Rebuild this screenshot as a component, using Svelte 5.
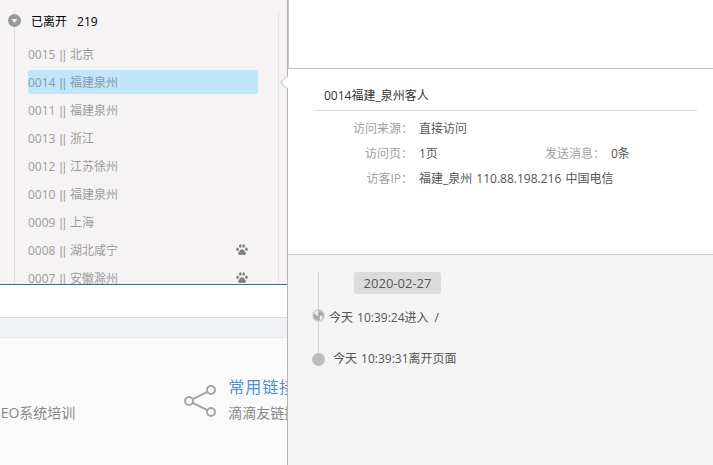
<script>
  const visitors = [
    { id: '0015', area: '北京' },
    { id: '0014', area: '福建泉州', active: true },
    { id: '0011', area: '福建泉州' },
    { id: '0013', area: '浙江' },
    { id: '0012', area: '江苏徐州' },
    { id: '0010', area: '福建泉州' },
    { id: '0009', area: '上海' },
    { id: '0008', area: '湖北咸宁', paw: true },
    { id: '0007', area: '安徽滁州', paw: true }
  ]
</script>

<div class="page">
  <div class="left">
    <div class="sidebar">
      <div class="tree">
        <div class="group">
          <span class="toggle"><svg width="13" height="13" viewBox="0 0 13 13"><circle cx="6.5" cy="6.5" r="6.5" fill="#999" /><path d="M3.6 5h5.8L6.5 9z" fill="#f5f3f4" /></svg></span>
          <span class="group-name">已离开</span>
          <span>219</span>
        </div>
        <ul>
          {#each visitors as v}
            <li class:active={v.active}>
              <span>{v.id} <span class="sep">||</span> {v.area}</span>
              {#if v.paw}
                <svg class="paw" width="12" height="12" viewBox="0 0 12 12" fill="#808080">
                  <ellipse cx="1.6" cy="5.2" rx="1.3" ry="1.7" />
                  <ellipse cx="4.3" cy="2" rx="1.3" ry="1.8" />
                  <ellipse cx="7.7" cy="2" rx="1.3" ry="1.8" />
                  <ellipse cx="10.4" cy="5.2" rx="1.3" ry="1.7" />
                  <path d="M6 5.2c1.3 0 1.9 1 2.6 2 .8.9 1.4 1.4 1.2 2.5-.2 1.3-1.500 1.500-2.300 1.300-.6-.1-1-.3-1.500-.3s-.9.2-1.500.3c-.8.2-2.100 0-2.300-1.300-.2-1.100.4-1.600 1.200-2.500.7-1 1.300-2 2.600-2z" />
                </svg>
              {/if}
            </li>
          {/each}
        </ul>
      </div>
    </div>
    <div class="input-strip"></div>
    <div class="grey-strip"></div>
    <div class="footer">
      <div class="seo">SEO系统培训</div>
      <div class="links">
        <svg width="34" height="34" viewBox="0 0 34 34" fill="none" stroke="#a6a6a6" stroke-width="2">
          <circle cx="6" cy="17" r="4" />
          <circle cx="28" cy="6" r="4" />
          <circle cx="28" cy="28" r="4" />
          <path d="M9.600 15.200L24.400 7.800M9.600 18.800L24.400 26.200" />
        </svg>
        <div class="links-text">
          <div class="links-title">常用链接</div>
          <div class="links-sub">滴滴友链接</div>
        </div>
      </div>
    </div>
  </div>

  <div class="right">
    <div class="top-blank"></div>
    <div class="card">
      <span class="arrow"></span>
      <div class="card-title">0014福建_泉州客人</div>
      <div class="info">
        <span class="label">访问来源：</span>
        <span class="value wide">直接访问</span>
        <span class="label">访问页：</span>
        <span class="value">1页</span>
        <span class="label msg">发送消息：</span>
        <span class="value">0条</span>
        <span class="label">访客IP：</span>
        <span class="value wide spaced">福建_泉州 110.88.198.216 中国电信</span>
      </div>
    </div>
    <div class="history">
      <div class="timeline">
        <span class="line"></span>
        <div class="date">2020-02-27</div>
        <div class="event enter">
          <svg width="13" height="13" viewBox="0 0 13 13">
            <circle cx="6.500" cy="6.500" r="6.500" fill="#d0d0d0" />
            <circle cx="6.500" cy="6.500" r="5" fill="#a8a8a8" />
            <path d="M3 2.500l3-.8 1 1.300-1.300 1.500.8 1.500-1.500 1.300-1-1.500-1.500-1zM8 6.500l2.500.3-.5 3-1.800 1.500-.7-2z" fill="#eee" />
          </svg>
          <span class="enter-text">今天 10:39:24进入</span>
          <span class="path">/</span>
        </div>
        <div class="event leave">
          <span class="dot"></span>
          <span>今天 10:39:31离开页面</span>
        </div>
      </div>
    </div>
  </div>
</div>

<style>
  :global(body) {
    margin: 0;
    background: #fff;
  }

  .page {
    display: flex;
    width: 713px;
    height: 465px;
    overflow: hidden;
    font-family: "Open Sans", "Noto Sans CJK SC", sans-serif;
    font-size: 12px;
    color: #444;
  }

  .left {
    display: flex;
    flex-direction: column;
    flex: none;
    width: 287px;
  }

  .sidebar {
    flex: none;
    height: 284px;
    overflow: hidden;
    padding-left: 14px;
    background: #f5f3f4;
  }

  .tree {
    width: 265px;
    height: 100%;
    box-sizing: border-box;
    border-left: 1px solid #dedede;
    border-right: 1px solid #e6e4e5;
  }

  .group {
    position: relative;
    display: flex;
    align-items: center;
    height: 20px;
    margin-top: 11px;
    padding-left: 16px;
    color: #000;
  }

  .toggle {
    position: absolute;
    left: -7px;
    top: 3px;
    display: flex;
  }

  .group-name {
    margin-right: 10px;
  }

  ul {
    list-style: none;
    margin: 11px 0 0;
    padding: 0 0 0 13px;
  }

  li {
    display: flex;
    align-items: center;
    justify-content: space-between;
    box-sizing: border-box;
    width: 230px;
    height: 24px;
    margin-bottom: 4px;
    border-radius: 3px;
    color: #9c9c9c;
  }

  li.active {
    background: #bfe6f9;
    color: #8a9aa3;
  }

  .sep {
    margin: 0 1px;
    font-family: "Liberation Sans", sans-serif;
  }

  .paw {
    margin-right: 10px;
    margin-top: -1px;
  }

  .input-strip {
    flex: none;
    height: 32px;
    border-top: 1px solid #0e7cab;
    border-bottom: 1px solid #d3dde3;
    background: #fff;
  }

  .grey-strip {
    flex: none;
    height: 19px;
    border-bottom: 1px solid #e8e8e8;
    background: #f0f1f3;
  }

  .footer {
    flex: 1;
    position: relative;
    display: flex;
    overflow: hidden;
    background: #fafafa;
  }

  .seo {
    margin-left: -7px;
    padding-top: 64px;
    font-size: 14px;
    color: #888;
    white-space: nowrap;
  }

  .links {
    display: flex;
    flex: none;
    margin-left: 108px;
    padding-top: 38px;
  }

  .links svg {
    margin-top: 8px;
  }

  .links-text {
    margin-left: 11px;
    white-space: nowrap;
  }

  .links-title {
    font-size: 16px;
    letter-spacing: 1px;
    line-height: 22px;
    color: #4a90d9;
  }

  .links-sub {
    margin-top: 5px;
    font-size: 14px;
    line-height: 20px;
    color: #888;
  }

  .right {
    display: flex;
    flex-direction: column;
    flex: 1;
    min-width: 0;
    border-left: 1px solid #b5b5b5;
  }

  .top-blank {
    flex: none;
    height: 68px;
    margin-left: 1px;
    background: #fff;
    box-shadow: -1px 0 0 #c8c8c8;
  }

  .card {
    position: relative;
    flex: none;
    height: 187px;
    box-sizing: border-box;
    padding: 17px 16px 0 26px;
    border-top: 1px solid #bdbdbd;
    border-bottom: 1px solid #c9c9c9;
    background: #fff;
  }

  .arrow {
    position: absolute;
    left: -6px;
    top: 9px;
    width: 8px;
    height: 8px;
    border-left: 1px solid #c8c8c8;
    border-bottom: 1px solid #c8c8c8;
    background: #fff;
    transform: rotate(45deg);
  }

  .card-title {
    height: 25px;
    box-sizing: border-box;
    padding-left: 10px;
    border-bottom: 1px solid #dedede;
    line-height: 20px;
    color: #333;
  }

  .info {
    display: grid;
    grid-template-columns: 99px 110px 70px auto;
    grid-auto-rows: 25px;
    column-gap: 6px;
    margin-top: 5px;
    line-height: 25px;
  }

  .label {
    text-align: right;
    color: #a0a0a0;
    white-space: nowrap;
  }

  .value {
    color: #555;
    white-space: nowrap;
  }

  .wide {
    grid-column: 2 / 5;
  }

  .spaced {
    word-spacing: 1px;
  }

  .history {
    flex: 1;
    padding: 17px 0 0 24px;
    background: #f4f4f4;
  }

  .timeline {
    position: relative;
  }

  .line {
    position: absolute;
    left: 6px;
    top: 0;
    width: 1px;
    height: 82px;
    background: #d2d2d2;
  }

  .date {
    width: 87px;
    height: 22px;
    margin-left: 42px;
    border-radius: 3px;
    background: #dcdcdc;
    font-size: 13px;
    text-align: center;
    line-height: 23px;
    color: #555;
  }

  .event {
    position: relative;
    display: flex;
    align-items: center;
    color: #555;
    word-spacing: 1px;
  }

  .event svg,
  .dot {
    flex: none;
  }

  .enter {
    margin-top: 12px;
    height: 20px;
  }

  .enter svg {
    margin-bottom: 2px;
  }

  .enter-text {
    margin: 2px 0 0 4px;
  }

  .path {
    margin: 2px 0 0 6px;
  }

  .leave {
    margin-top: 22px;
    height: 20px;
  }

  .dot {
    width: 13px;
    height: 13px;
    margin: 2px 8px 0 0;
    border-radius: 50%;
    background: #bdbdbd;
  }
</style>
